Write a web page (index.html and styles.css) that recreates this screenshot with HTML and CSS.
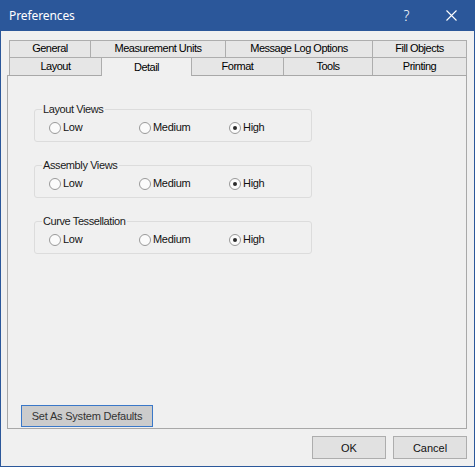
FILE: index.html
```html
<!DOCTYPE html>
<html>
<head>
<meta charset="utf-8">
<title>Preferences</title>
<link rel="stylesheet" href="styles.css">
</head>
<body>
<div class="window">
  <div class="titlebar">
    <span class="title">Preferences</span>
    <span class="tbtn help">?</span>
    <span class="tbtn close"><svg width="11" height="11" viewBox="0 0 11 11"><path d="M0.5 0.5L10.5 10.5M10.5 0.5L0.5 10.5" stroke="#fff" stroke-width="1.1" fill="none"/></svg></span>
  </div>
  <div class="main">
    <div class="tabs">
      <div class="tabrow row1">
        <div class="tab">General</div>
        <div class="tab">Measurement Units</div>
        <div class="tab">Message Log Options</div>
        <div class="tab last">Fill Objects</div>
      </div>
      <div class="tabrow row2">
        <div class="tab">Layout</div>
        <div class="tab selected">Detail</div>
        <div class="tab">Format</div>
        <div class="tab">Tools</div>
        <div class="tab last">Printing</div>
      </div>
    </div>
    <div class="panel">
      <fieldset class="group">
        <legend>Layout Views</legend>
        <div class="opts">
          <label class="radio"><span class="circle"></span>Low</label>
          <label class="radio"><span class="circle"></span>Medium</label>
          <label class="radio"><span class="circle checked"></span>High</label>
        </div>
      </fieldset>
      <fieldset class="group">
        <legend>Assembly Views</legend>
        <div class="opts">
          <label class="radio"><span class="circle"></span>Low</label>
          <label class="radio"><span class="circle"></span>Medium</label>
          <label class="radio"><span class="circle checked"></span>High</label>
        </div>
      </fieldset>
      <fieldset class="group">
        <legend>Curve Tessellation</legend>
        <div class="opts">
          <label class="radio"><span class="circle"></span>Low</label>
          <label class="radio"><span class="circle"></span>Medium</label>
          <label class="radio"><span class="circle checked"></span>High</label>
        </div>
      </fieldset>
      <button class="sysdef">Set As System Defaults</button>
    </div>
    <div class="footer">
      <button class="btn">OK</button>
      <button class="btn">Cancel</button>
    </div>
  </div>
</div>
</body>
</html>
```

FILE: styles.css
```css
* { box-sizing: border-box; }
html, body { margin: 0; padding: 0; }
body {
  width: 475px;
  height: 467px;
  overflow: hidden;
  background: #f0f0f0;
  font-family: "Liberation Sans", Arial, sans-serif;
  font-size: 11px;
  color: #000;
}
.window {
  width: 475px;
  height: 467px;
  border: 1px solid #2b579a;
  border-top: 0;
  display: flex;
  flex-direction: column;
  background: #f0f0f0;
}
.titlebar {
  height: 31px;
  flex: none;
  background: #2b579a;
  color: #fff;
  display: flex;
  align-items: center;
}
.title {
  flex: 1;
  padding-left: 8px;
  font-family: "Noto Sans", sans-serif;
  font-size: 12px;
  letter-spacing: -0.1px;
}
.tbtn {
  width: 45px;
  height: 30px;
  display: flex;
  align-items: center;
  justify-content: center;
}
.help {
  font-family: "Noto Sans", sans-serif;
  font-size: 14px;
  font-weight: 300;
}
.main {
  flex: 1;
  display: flex;
  flex-direction: column;
  padding: 9px 7px 7px 6px;
}
.tabs {
  margin-left: 2px;
  margin-bottom: -1px;
  position: relative;
  z-index: 1;
  letter-spacing: -0.5px;
}
.tabrow { display: grid; align-items: start; }
.row1 { grid-template-columns: 81px 135px 147px 95px; height: 17px; }
.row2 { grid-template-columns: 92px 90px 92px 89px 95px; height: 19px; }
.tab {
  border-top: 1px solid #adadad;
  border-left: 1px solid #adadad;
  background: #e6e6e6;
  text-align: center;
  white-space: nowrap;
}
.tab.last { border-right: 1px solid #adadad; }
.row1 .tab { height: 17px; line-height: 15px; }
.row2 .tab { height: 18px; line-height: 16px; }
.row2 .tab.selected {
  height: 19px;
  background: #f0f0f0;
  padding-top: 2px;
  line-height: 15px;
  border-right: 1px solid #adadad;
  margin-right: -1px;
  position: relative;
}
.panel {
  flex: 1;
  border: 1px solid #a8a8a8;
  display: flex;
  flex-direction: column;
  padding: 27px 0 1px 13px;
}
.group {
  margin: 0 0 17px 13px;
  padding: 0;
  width: 278px;
  border: 1px solid #dcdcdc;
  border-radius: 3px;
  min-width: 0;
}
.group legend {
  margin-left: 7px;
  padding: 0 2px 0 1px;
  line-height: 13px;
  color: #1a1a1a;
  letter-spacing: -0.4px;
}
.opts {
  display: grid;
  grid-template-columns: 90px 90px 90px;
  padding: 5px 0 7px 14px;
}
.radio {
  display: flex;
  align-items: center;
  height: 13px;
  line-height: 13px;
  gap: 2px;
  color: #111;
  letter-spacing: -0.3px;
}
.circle {
  width: 12px;
  height: 12px;
  border: 1px solid #999999;
  border-radius: 50%;
  background: #fbfbfb;
  display: flex;
  align-items: center;
  justify-content: center;
  flex: none;
}
.circle.checked::after {
  content: "";
  width: 4px;
  height: 4px;
  border-radius: 50%;
  background: #2b2b2b;
}
.sysdef {
  margin-top: auto;
  align-self: flex-start;
  margin-left: 0;
  width: 132px;
  height: 22px;
  padding: 0;
  border: 1px solid #3a78c8;
  background: #cccccc;
  color: #333;
  font-family: "Liberation Sans", Arial, sans-serif;
  font-size: 11px;
  letter-spacing: -0.2px;
}
.footer {
  display: flex;
  justify-content: flex-end;
  gap: 7px;
  margin-top: 7px;
  height: 23px;
  flex: none;
}
.btn {
  width: 74px;
  height: 23px;
  padding: 0;
  border: 1px solid #adadad;
  background: #e1e1e1;
  color: #111;
  font-family: "Liberation Sans", Arial, sans-serif;
  font-size: 11px;
}
```
